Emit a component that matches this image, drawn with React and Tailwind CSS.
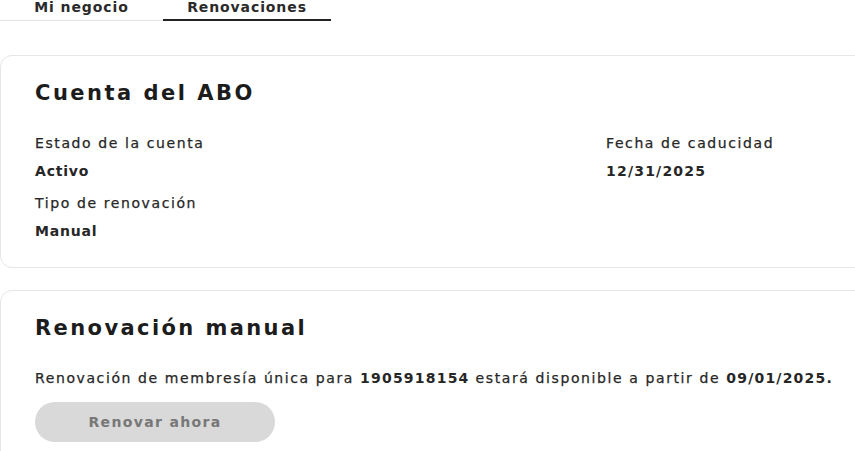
export default function App() {
  const font = { fontFamily: '"DejaVu Sans", "Liberation Sans", sans-serif' };
  const reg = "text-[14px] leading-[20px] tracking-[1.6px] [-webkit-text-stroke:0.25px_#2a2a2a]";
  const val = "text-[14px] leading-[20px] font-bold tracking-[0.8px]";
  return (
    <div className="w-[855px] h-[451px] overflow-hidden bg-white text-[#262626]" style={font}>
      {/* Tabs */}
      <div className="flex items-end mt-[-3px]">
        <div className="w-[163px] h-[24px] border-b border-[#e3e3e3] flex justify-center">
          <span className="text-[14px] leading-[20px] font-bold tracking-[0.9px] text-[#2a2a2a]">Mi negocio</span>
        </div>
        <div className="w-[168px] h-[24px] border-b-2 border-[#222] flex justify-center">
          <span className="text-[14px] leading-[20px] font-bold tracking-[0.9px] text-[#2a2a2a]">Renovaciones</span>
        </div>
      </div>

      {/* Card 1 */}
      <div className="mt-[34px] w-[900px] rounded-[12px] border border-[#e6e6e6] pl-[34px] pt-[23px] pb-[26px]">
        <h2 className="text-[21px] leading-[28px] font-bold tracking-[2.5px] text-[#1c1c1c]">Cuenta del ABO</h2>
        <div className="mt-[26px] grid grid-cols-[571px_1fr] gap-y-[12px]">
          <div className="flex flex-col gap-[8px]">
            <span className={reg}>Estado de la cuenta</span>
            <span className={val}>Activo</span>
          </div>
          <div className="flex flex-col gap-[8px]">
            <span className={reg}>Fecha de caducidad</span>
            <span className="text-[14px] leading-[20px] font-bold tracking-[1.2px]">12/31/2025</span>
          </div>
          <div className="flex flex-col gap-[8px]">
            <span className={reg}>Tipo de renovación</span>
            <span className={val}>Manual</span>
          </div>
        </div>
      </div>

      {/* Card 2 */}
      <div className="mt-[22px] w-[900px] h-[200px] rounded-[12px] border border-[#e6e6e6] pl-[34px] pt-[23px]">
        <h2 className="text-[21px] leading-[28px] font-bold tracking-[2.4px] text-[#1c1c1c]">Renovación manual</h2>
        <p className="mt-[26px] text-[14px] leading-[20px] tracking-[1.6px] whitespace-nowrap">
          <span className="[-webkit-text-stroke:0.25px_#2a2a2a]">Renovación de membresía única para </span>
          <span className="font-bold tracking-[1.2px]">1905918154</span>
          <span className="[-webkit-text-stroke:0.25px_#2a2a2a]"> estará disponible a partir de </span>
          <span className="font-bold tracking-[1.2px]">09/01/2025.</span>
        </p>
        <button className="mt-[14px] w-[240px] h-[40px] rounded-full bg-[#d9d9d9] text-[14px] leading-[20px] font-bold tracking-[1.35px] text-[#777]">
          Renovar ahora
        </button>
      </div>
    </div>
  );
}
